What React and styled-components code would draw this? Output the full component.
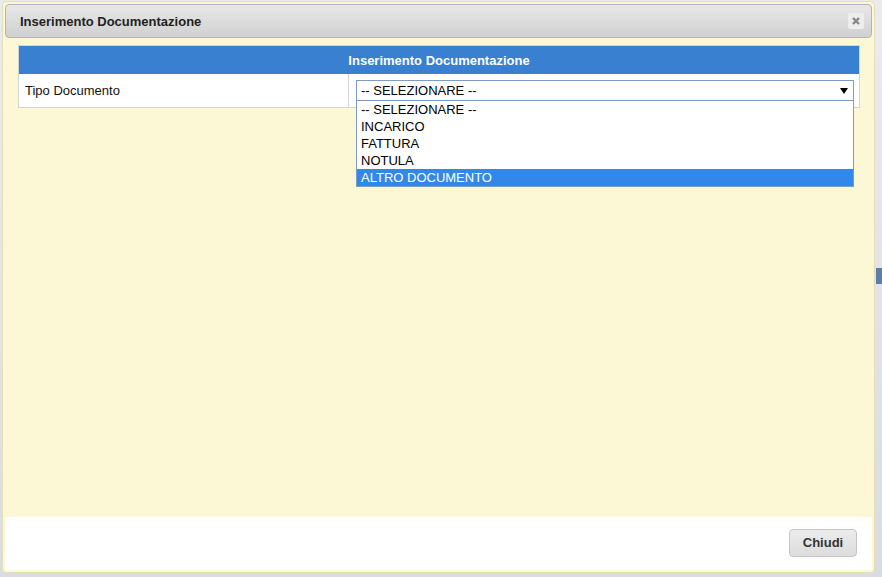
import React from 'react'
import styled, { createGlobalStyle } from 'styled-components'

const Global = createGlobalStyle`
  html, body { margin: 0; padding: 0; }
  body {
    width: 882px;
    height: 577px;
    overflow: hidden;
    background: #dfe3e8;
    font-family: "Liberation Sans", Arial, sans-serif;
  }
`

const Page = styled.div`
  position: relative;
  width: 882px;
  height: 577px;
  background: linear-gradient(to bottom, #e9ecef, #d8dde3);
`

const Backdrop = styled.div`
  position: absolute;
  right: 0;
  top: 268px;
  width: 6px;
  height: 16px;
  background: #5b7fa8;
`

const Dialog = styled.div`
  position: absolute;
  left: 2px;
  top: 1px;
  width: 873px;
  height: 572px;
  background: #fcf7d4;
  border: 1px solid #e6dfb4;
  border-radius: 4px;
  padding: 2px;
  box-sizing: border-box;
  display: flex;
  flex-direction: column;
`

const TitleBar = styled.div`
  height: 34px;
  box-sizing: border-box;
  border: 1px solid #b4b4b4;
  border-radius: 4px;
  background: linear-gradient(to bottom, #e8e8e8, #d0d0d0);
  display: flex;
  align-items: center;
  justify-content: space-between;
  padding: 0 7px 0 14px;
  font-weight: bold;
  font-size: 13px;
  color: #222;
`

const CloseBtn = styled.div`
  width: 16px;
  height: 16px;
  background: #ededed;
  border-radius: 2px;
  display: flex;
  align-items: center;
  justify-content: center;
`

const Body = styled.div`
  flex: 1;
  padding: 7px 12px 0 13px;
`

const Table = styled.div`
  border: 1px solid #d4d4d4;
  background: #fff;
`

const Header = styled.div`
  height: 28px;
  background: #3a80d0;
  color: #fff;
  font-weight: bold;
  font-size: 13px;
  display: flex;
  align-items: center;
  justify-content: center;
`

const Row = styled.div`
  display: grid;
  grid-template-columns: 330px 1fr;
  height: 33px;
`

const Label = styled.div`
  padding-left: 6px;
  display: flex;
  align-items: center;
  font-size: 13px;
  color: #111;
  border-right: 1px solid #d4d4d4;
`

const Field = styled.div`
  position: relative;
  padding: 6px 5px 0 7px;
`

const Select = styled.div`
  height: 21px;
  box-sizing: border-box;
  border: 1px solid #7c9cc6;
  background: #fff;
  display: flex;
  align-items: center;
  justify-content: space-between;
  padding: 0 5px 0 4px;
  font-size: 13px;
  color: #000;
`

const List = styled.div`
  position: absolute;
  left: 7px;
  right: 5px;
  top: 27px;
  background: #fff;
  border: 1px solid #7c9cc6;
  border-top: none;
  z-index: 2;
`

const Option = styled.div`
  height: 17px;
  line-height: 17px;
  padding-left: 4px;
  font-size: 13px;
  color: ${p => (p.selected ? '#fff' : '#000')};
  background: ${p => (p.selected ? '#3089e8' : 'transparent')};
`

const Footer = styled.div`
  height: 53px;
  background: #fff;
  display: flex;
  align-items: center;
  justify-content: flex-end;
  padding-right: 15px;
`

const Button = styled.button`
  width: 68px;
  height: 28px;
  margin-top: -2px;
  border: 1px solid #c6c6c6;
  border-radius: 4px;
  background: linear-gradient(to bottom, #ececec, #dcdcdc);
  font-family: "Liberation Sans", Arial, sans-serif;
  font-weight: bold;
  font-size: 13px;
  color: #333;
`

const options = ['-- SELEZIONARE --', 'INCARICO', 'FATTURA', 'NOTULA', 'ALTRO DOCUMENTO']

export default function App() {
  return (
    <Page>
      <Global />
      <Backdrop />
      <Dialog>
        <TitleBar>
          Inserimento Documentazione
          <CloseBtn>
            <svg width='10' height='10' viewBox='0 0 10 10'>
              <path d='M2 2 L8 8 M8 2 L2 8' stroke='#888' strokeWidth='2.4' />
            </svg>
          </CloseBtn>
        </TitleBar>
        <Body>
          <Table>
            <Header>Inserimento Documentazione</Header>
            <Row>
              <Label>Tipo Documento</Label>
              <Field>
                <Select>
                  -- SELEZIONARE --
                  <svg width='8' height='6' viewBox='0 0 8 6'>
                    <path d='M0 0 H8 L4 6 Z' fill='#000' />
                  </svg>
                </Select>
                <List>
                  {options.map((o, i) => (
                    <Option key={o} selected={i === options.length - 1}>{o}</Option>
                  ))}
                </List>
              </Field>
            </Row>
          </Table>
        </Body>
        <Footer>
          <Button>Chiudi</Button>
        </Footer>
      </Dialog>
    </Page>
  )
}
